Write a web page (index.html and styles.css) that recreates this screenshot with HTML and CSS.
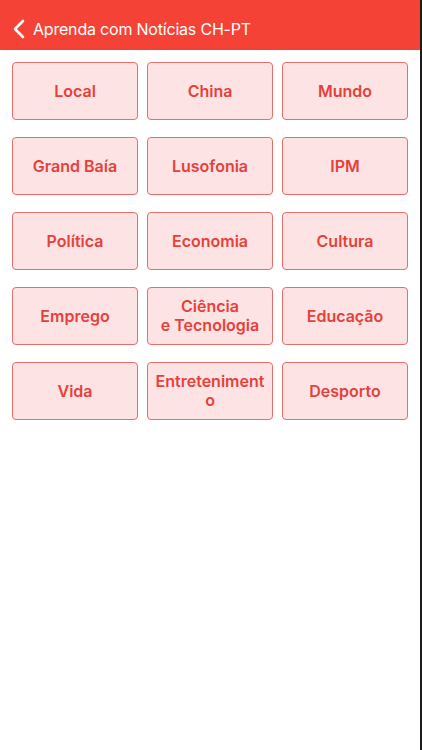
FILE: index.html
```html
<!DOCTYPE html>
<html lang="pt">
<head>
    <meta charset="UTF-8">
    <meta name="viewport" content="width=device-width, initial-scale=1.0">
    <title>Aprenda com Notícias CH-PT</title>
    <link rel="stylesheet" href="styles.css">
</head>
<body>
    <div class="screen">
        <div class="nav-bar">
            <svg class="back-icon" width="14" height="20" viewBox="0 0 14 20">
                <path d="M11 2 L3 10 L11 18" fill="none" stroke="#fff" stroke-width="2.6" stroke-linecap="round" stroke-linejoin="round"/>
            </svg>
            <span class="nav-title">Aprenda com Notícias CH-PT</span>
        </div>

        <div class="category-grid">
            <button class="category-btn">Local</button>
            <button class="category-btn">China</button>
            <button class="category-btn">Mundo</button>
            <button class="category-btn">Grand Baía</button>
            <button class="category-btn">Lusofonia</button>
            <button class="category-btn">IPM</button>
            <button class="category-btn">Política</button>
            <button class="category-btn">Economia</button>
            <button class="category-btn">Cultura</button>
            <button class="category-btn">Emprego</button>
            <button class="category-btn">Ciência<br>e Tecnologia</button>
            <button class="category-btn">Educação</button>
            <button class="category-btn">Vida</button>
            <button class="category-btn">Entreteniment<br>o</button>
            <button class="category-btn">Desporto</button>
        </div>
    </div>
</body>
</html>
```

FILE: styles.css
```css
body {
    margin: 0;
    background: #1c1c1c;
    font-family: Inter, 'Noto Sans', sans-serif;
}

.screen {
    width: 420px;
    height: 750px;
    background: #fff;
    border-right: 2px solid #1c1c1c;
    overflow: hidden;
}

.nav-bar {
    height: 50px;
    background: #f44336;
    display: flex;
    align-items: center;
    padding: 8px 0 0 12px;
    box-sizing: border-box;
    gap: 7px;
}

.back-icon {
    flex-shrink: 0;
}

.nav-title {
    color: #fff;
    font-size: 16px;
    letter-spacing: -0.2px;
}

.category-grid {
    display: grid;
    grid-template-columns: repeat(3, 126px);
    grid-auto-rows: 58px;
    column-gap: 9px;
    row-gap: 17px;
    padding: 12px 0 0 12px;
}

.category-btn {
    background: #fde3e3;
    border: 1px solid #e66e6b;
    border-radius: 4px;
    color: #e5413b;
    font-family: Inter, 'Noto Sans', sans-serif;
    font-size: 16px;
    font-weight: 600;
    line-height: 19px;
    padding: 0 4px;
    cursor: pointer;
}
```
